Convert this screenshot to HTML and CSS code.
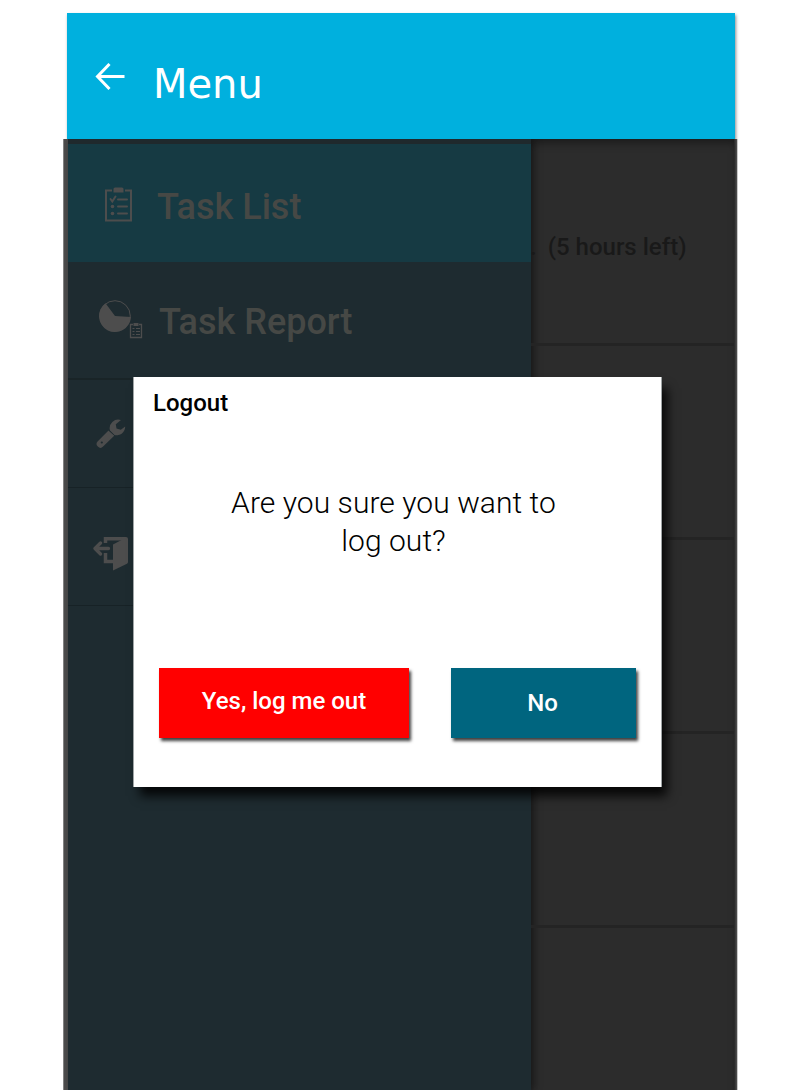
FILE: index.html
```html
<!DOCTYPE html>
<html lang="en">
<head>
<meta charset="utf-8">
<title>Menu</title>
<link rel="stylesheet" href="styles.css">
</head>
<body>
<div class="app">
  <header class="topbar">
    <svg class="back" width="30" height="28" viewBox="0 0 30 28" fill="none" stroke="#fff" stroke-width="3"><path d="M14.500 1 2.500 13.500l12 12.500M2 13.500h27.500"/></svg>
    <h1 class="title">Menu</h1>
  </header>
  <div class="screen">
    <div class="edge"></div>
    <nav class="menu">
      <div class="item item-active">
        <svg class="icon-list" width="27" height="35" viewBox="0 0 27 35" fill="none" stroke="#4d4d4d" stroke-width="2"><path d="M7 3.500H1V33.500h25v-30h-6"/><path d="M8.500 5.500V2q0-1.500 1.500-1.500h7q1.500 0 1.500 1.500v3.500z" fill="#4d4d4d" stroke="none"/><path d="m5.500 12 1.800 2.500 3.200-5M13 12.500h9M13 19.500h9M13 26.500h9" stroke-linecap="round"/><circle cx="7.500" cy="19.500" r="1.800" fill="#4d4d4d" stroke="none"/><circle cx="7.500" cy="26.500" r="1.800" fill="#4d4d4d" stroke="none"/></svg>
        <span class="label">Task List</span>
      </div>
      <div class="item item-report">
        <svg class="icon-report" width="44" height="39" viewBox="0 0 44 39" fill="none" stroke="#4d4d4d"><circle cx="16" cy="16" r="15.300"/><path d="M16 16 6.500 3.200A16 16 0 1 0 32 17z" fill="#4d4d4d" stroke="none"/><path d="M34 24.500h-2.500v13h11v-13H40" stroke-width="1.300"/><path d="M34.500 23h5v3h-5z" fill="#4d4d4d" stroke="none"/><path d="M33.500 28.500h2M37 28.500h4M33.500 31.500h2M37 31.500h4M33.500 34.500h2M37 34.500h4" stroke-width="1.200"/></svg>
        <span class="label">Task Report</span>
      </div>
      <div class="item item-settings">
        <svg width="30" height="30" viewBox="0 0 30 30"><path d="M12.500 11.500 1.800 22.300a3.700 3.700 0 0 0 5.300 5.300L18.500 16.500z" fill="#4d4d4d"/><path d="M25 1A8.600 8.600 0 0 0 14 11.500l4.500 4.500A8.600 8.600 0 0 0 29.200 7.500l-4.400 3.300-4.300-1.300-.7-4.200z" fill="#4d4d4d"/><path d="m12.500 11 6.500 6" stroke="#1e2b30" stroke-width=".8"/><circle cx="5.800" cy="23.500" r="1.100" fill="#1e2b30"/></svg>
      </div>
      <div class="item item-exit">
        <svg width="35" height="35" viewBox="0 0 35 35"><path d="M12.500 7V2.700h19M12.500 17v8.500H21" fill="none" stroke="#4d4d4d" stroke-width="3.500"/><path d="M28.500 4 20 8.500v26l14-6.800q1-.5 1-1.700V3q0-2-2-2h-4z" fill="#4d4d4d"/><path d="m7.500 7-5.500 5.500 5.500 5.500M3 12.500h12.500" fill="none" stroke="#4d4d4d" stroke-width="3.300" stroke-linecap="round" stroke-linejoin="round"/></svg>
      </div>
    </nav>
    <main class="tasks">
      <div class="task task-first"><span class="dot">.</span><span>(5 hours left)</span></div>
      <div class="task"></div>
      <div class="task"></div>
      <div class="task"></div>
    </main>
    <div class="edge-right"></div>
  </div>
</div>
<section class="dialog">
  <h2 class="dialog-title">Logout</h2>
  <p class="message">Are you sure you want to<br>log out?</p>
  <div class="actions">
    <button class="btn btn-yes">Yes, log me out</button>
    <button class="btn btn-no">No</button>
  </div>
</section>
</body>
</html>
```
FILE: styles.css
```css
* { box-sizing: border-box; }
body { margin: 0; height: 1090px; overflow: hidden; background: #fff; font-family: Roboto, sans-serif; }
.app { width: 675px; height: 1090px; margin-left: 63px; padding-top: 13px; display: flex; flex-direction: column; }
.topbar { height: 126px; flex: none; margin: 0 3px 0 4px; padding-left: 28px; display: flex; align-items: flex-start; gap: 28px; background: #00b0de; box-shadow: 1px 2px 3px rgba(0,0,0,.45); color: #fff; }
.back { margin-top: 50px; }
.title { margin: 47px 0 0; font: 400 40px/48px "DejaVu Sans", sans-serif; }
.screen { position: relative; flex: 1; display: flex; overflow: hidden; background: #2c2c2c; }
.edge { width: 5px; border-left: 1px solid #848484; background: #4d4d4d; }
.edge-right { width: 4px; border-right: 1px solid #c8c8c8; background: linear-gradient(90deg, #242424, #505050); }
.menu { width: 463px; border-top: 5px solid #1f292d; background: #1e2b30; box-shadow: 3px 0 8px rgba(0,0,0,.4); }
.item { display: flex; align-items: flex-start; }
.item-active { height: 118px; padding: 43px 0 0 37px; gap: 25px; background: #163a43; }
.item-report { height: 118px; padding: 38px 0 0 31px; gap: 16px; border-bottom: 2px solid #192427; }
.label { font-size: 36px; font-weight: 500; line-height: 42px; color: #464845; white-space: nowrap; }
.item-active .label { margin-top: -1px; }
.item-report .label { margin-top: 1px; }
.item-settings { height: 108px; padding: 39px 0 0 28px; border-bottom: 1px solid #172226; }
.item-exit { height: 118px; padding: 48px 0 0 25px; border-bottom: 1px solid #172226; }
.tasks { flex: 1; padding-top: 13px; box-shadow: inset 0 7px 9px -3px rgba(0,0,0,.4); }
.task { height: 194px; border-bottom: 3px solid #242424; }
.task-first { padding-top: 81px; display: flex; gap: 11px; font-size: 24px; font-weight: 500; line-height: 28px; color: #191919; white-space: nowrap; }
.dot { margin-left: -1px; }
.dialog { position: absolute; left: 133px; top: 377px; width: 529px; height: 410px; padding: 12px 25px 0; display: flex; flex-direction: column; border: solid #a0a5a6; border-width: 0 1px; background: #fff; color: #000; box-shadow: 6px 10px 10px -1px rgba(0,0,0,.85); }
.dialog-title { margin: 0 0 0 -6px; font-size: 24px; font-weight: 500; line-height: 28px; }
.message { margin: 67px 0 0; padding-right: 8px; text-align: center; font-size: 30px; font-weight: 300; line-height: 38px; letter-spacing: .06px; }
.actions { margin-top: 108px; display: flex; justify-content: space-between; }
.btn { height: 70px; border: 0; padding: 0; font: 500 24px/28px Roboto, sans-serif; color: #fff; box-shadow: 2px 3px 3px rgba(0,0,0,.75); }
.btn-yes { width: 250px; padding-bottom: 4px; background: #f00; }
.btn-no { width: 185px; padding-right: 2px; background: #00657f; }
```
